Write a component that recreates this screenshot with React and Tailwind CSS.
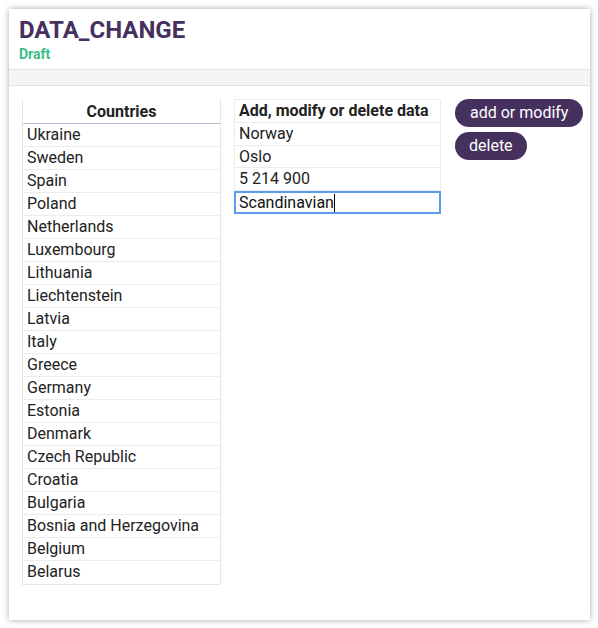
const countries = [
  "Ukraine",
  "Sweden",
  "Spain",
  "Poland",
  "Netherlands",
  "Luxembourg",
  "Lithuania",
  "Liechtenstein",
  "Latvia",
  "Italy",
  "Greece",
  "Germany",
  "Estonia",
  "Denmark",
  "Czech Republic",
  "Croatia",
  "Bulgaria",
  "Bosnia and Herzegovina",
  "Belgium",
  "Belarus",
];

const values = ["Norway", "Oslo", "5 214 900"];

export default function App() {
  return (
    <div className="min-h-screen bg-white pt-[9px] pl-[9px] font-['Roboto',sans-serif]">
      <div className="w-[581px] h-[611px] bg-white shadow-[0_0_6px_rgba(0,0,0,0.35)]">
        {/* Header */}
        <div className="pl-[10px] pt-[6px] h-[60px]">
          <h1 className="text-[24px] leading-[30px] font-bold text-[#45305e]">DATA_CHANGE</h1>
          <p className="text-[14px] leading-[18px] font-bold text-[#3dbd8a]">Draft</p>
        </div>
        <div className="h-[17px] bg-[#f5f5f5] border-y border-[#e3e3e3]"></div>

        {/* Content */}
        <div className="flex items-start pl-[13px] pt-[13px]">
          {/* Countries */}
          <div className="w-[199px] border-x border-b border-[#e6e6e6]">
            <div className="h-[25px] border-b border-[#c5b4d2] text-center text-[16px] leading-[24px] font-bold text-[#222] pt-[1px]">
              Countries
            </div>
            {countries.map((c) => (
              <div
                key={c}
                className="h-[23px] border-b border-[#ececec] last:border-b-0 pl-[4px] text-[16px] leading-[21px] text-[#222]"
              >
                {c}
              </div>
            ))}
          </div>

          {/* Edit table */}
          <div className="ml-[13px] w-[207px] border-x border-t border-[#ececec]">
            <div className="h-[23px] border-b border-[#ececec] pl-[4px] text-[16px] leading-[21px] font-bold text-[#222]">
              Add, modify or delete data
            </div>
            {values.map((v, i) => (
              <div
                key={v}
                className={`border-b border-[#ececec] pl-[4px] text-[16px] leading-[21px] text-[#222] ${
                  i === 1 ? "h-[22px]" : "h-[23px]"
                }`}
              >
                {v}
              </div>
            ))}
            <div className="-mx-px h-[23px] border-2 border-[#5b9cf0] pl-[3px] text-[16px] leading-[19px] text-[#111] flex items-center">
              <span>Scandinavian</span>
              <span className="w-px h-[18px] bg-black"></span>
            </div>
          </div>

          {/* Buttons */}
          <div className="ml-[14px] flex flex-col items-start gap-[5px]">
            <button className="h-[28px] px-[15px] rounded-full bg-[#45305e] text-white text-[16px] leading-[28px]">
              add or modify
            </button>
            <button className="h-[28px] px-[14px] rounded-full bg-[#45305e] text-white text-[16px] leading-[28px]">
              delete
            </button>
          </div>
        </div>
      </div>
    </div>
  );
}
